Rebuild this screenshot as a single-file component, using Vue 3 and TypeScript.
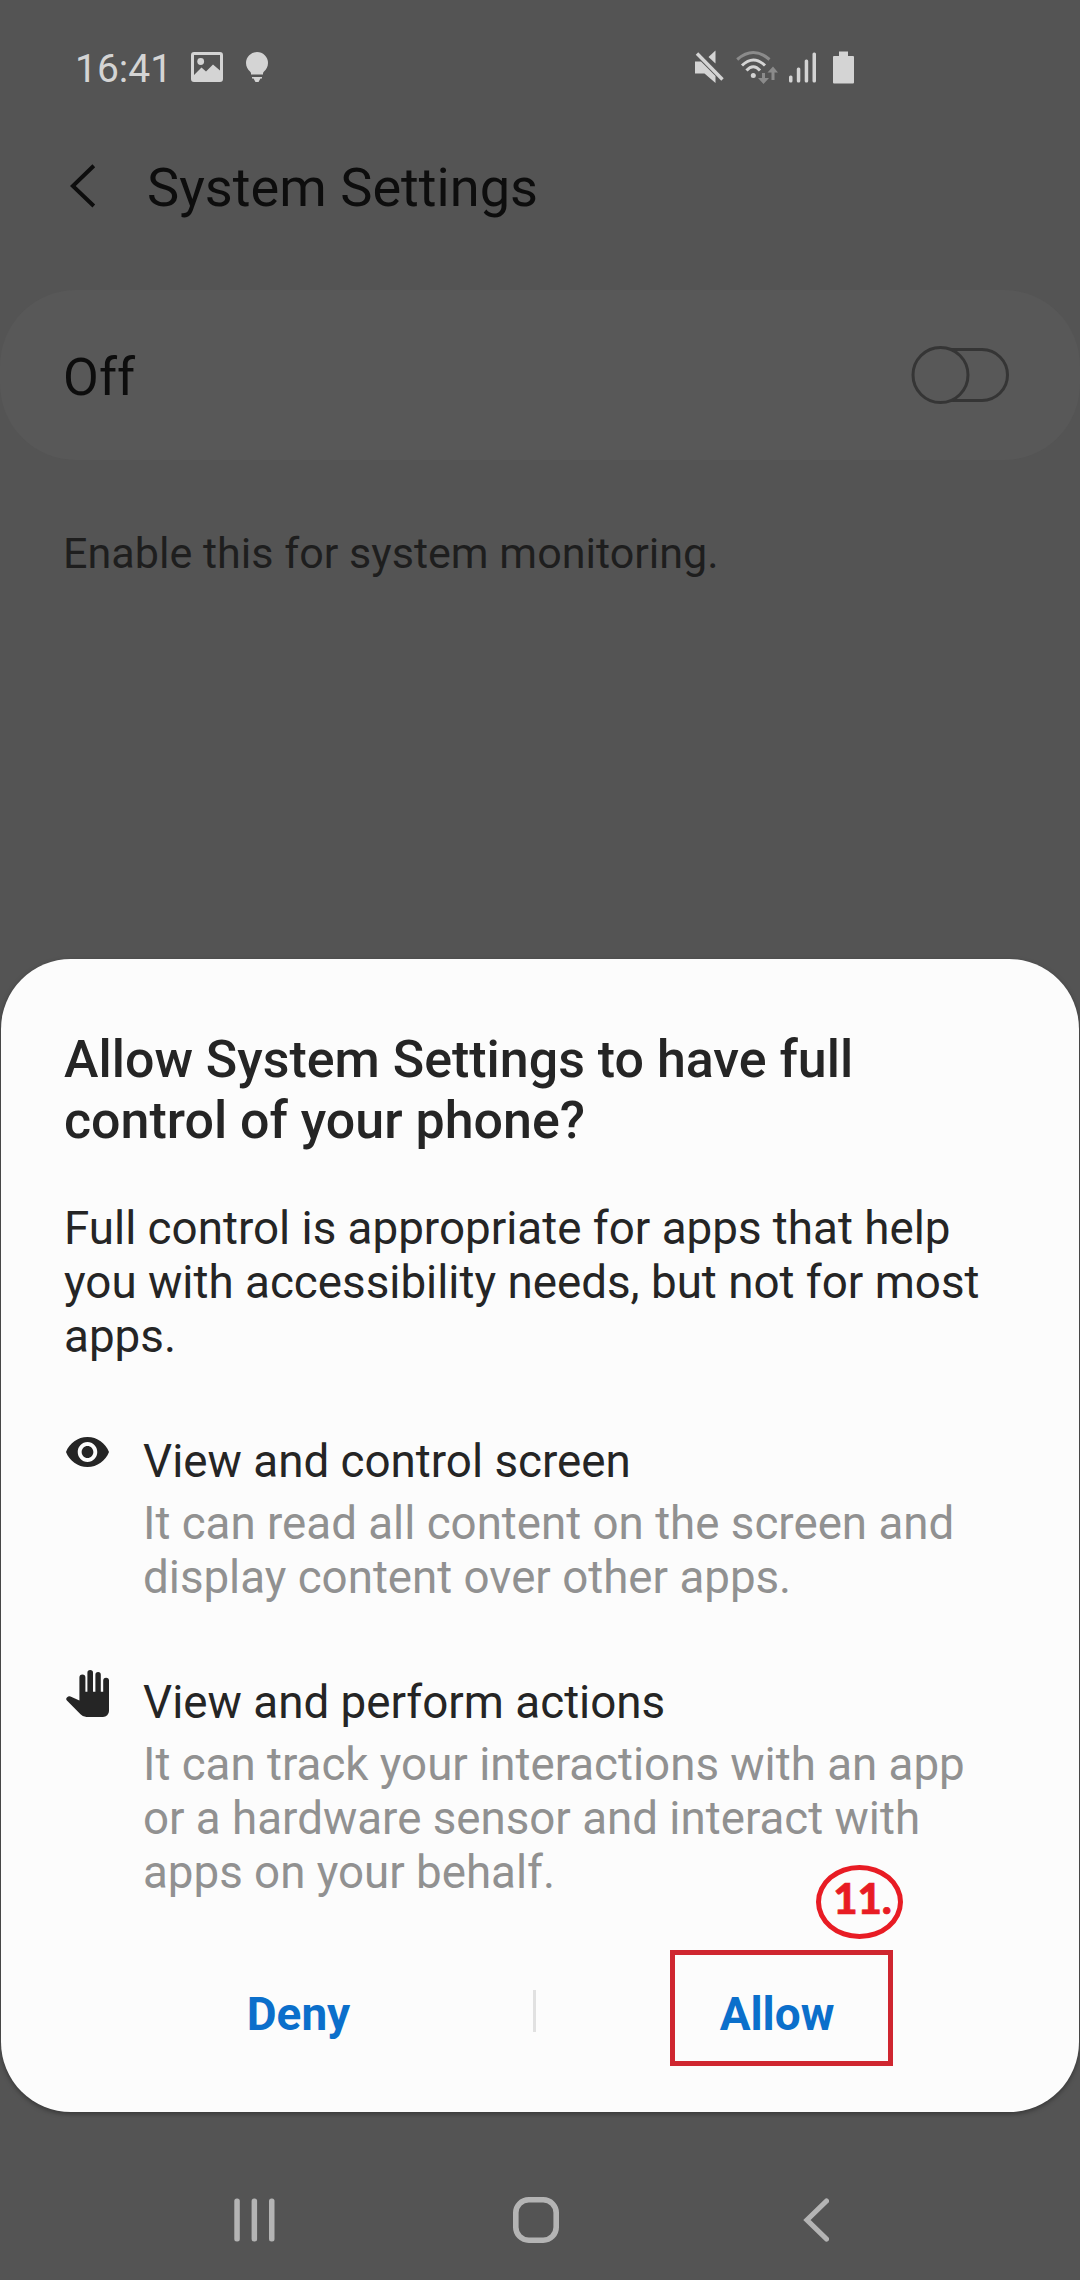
<script setup lang="ts">
interface Permission {
  icon: 'eye' | 'hand'
  title: string
  lines: string[]
}

const heading: string[] = ['Allow System Settings to have full', 'control of your phone?']
const body: string[] = [
  'Full control is appropriate for apps that help',
  'you with accessibility needs, but not for most',
  'apps.',
]
const permissions: Permission[] = [
  {
    icon: 'eye',
    title: 'View and control screen',
    lines: ['It can read all content on the screen and', 'display content over other apps.'],
  },
  {
    icon: 'hand',
    title: 'View and perform actions',
    lines: ['It can track your interactions with an app', 'or a hardware sensor and interact with', 'apps on your behalf.'],
  },
]
</script>

<template>
  <div class="phone">
    <header class="status">
      <span class="time">16:41</span>
      <svg class="picture" width="32" height="30" viewBox="0 0 32 30">
        <path fill-rule="evenodd" d="M3 0H29Q32 0 32 3V27Q32 30 29 30H3Q0 30 0 27V3Q0 0 3 0ZM3 3V23L10.5 15.5L15 19.5L22 12.5L29 18.5V3Z" />
        <circle cx="9.7" cy="9.5" r="3.4" />
      </svg>
      <svg class="bulb" width="22" height="31" viewBox="0 0 22 31">
        <path d="M11 0a11 11 0 0 1 11 11c0 4-2 6.500-4 8.500-1 1-1 1.500-1 3H5c0-1.500 0-2-1-3-2-2-4-4.500-4-8.500a11 11 0 0 1 11-11Z" />
        <path d="M6 25h10v1.500h-1.500L12.500 30h-3L7.500 26.500H6Z" />
      </svg>
      <svg class="mute" width="30" height="34" viewBox="0 0 30 34">
        <path d="M0 11.500H6L20.500 26V33L9.500 23.500H0Z" />
        <path d="M20.500 0.500V13.500L13.500 7Z" />
        <path d="M2 3.500L27.500 29.500" fill="none" stroke="#d4d4d4" stroke-width="3.400" />
      </svg>
      <svg class="wifi" width="42" height="34" viewBox="0 0 42 34">
        <g fill="none" stroke-width="3">
          <path stroke="#8b8b8b" d="M1.200 9.500Q17.300-4.500 33.500 9.500" />
          <path stroke="#d4d4d4" d="M6 15.500Q17.300 4.500 29 15.500" />
          <path stroke="#d4d4d4" d="M10.500 20.500Q17.300 13 24 20.500" />
        </g>
        <circle cx="17.300" cy="25.500" r="2.500" />
        <path fill="#8b8b8b" d="M26 23h3v5h4l-5.500 6-5.500-6h4ZM35.500 30V22.500H31.500L37 16.500 42 22.500H38.500V30Z" />
      </svg>
      <svg class="signal" width="28" height="31" viewBox="0 0 28 31">
        <rect x="0" y="23.500" width="3.500" height="7" rx="1.500" />
        <rect x="7.800" y="15.500" width="3.500" height="15" rx="1.500" />
        <rect x="15.700" y="7.500" width="3.500" height="23" rx="1.500" />
        <rect x="23.500" y="0.500" width="3.500" height="30" rx="1.500" />
      </svg>
      <svg class="battery" width="21" height="33" viewBox="0 0 21 33">
        <path d="M6 0.500H15V5H20Q21 5 21 6V31.500Q21 32.500 20 32.500H1Q0 32.500 0 31.500V6Q0 5 1 5H6Z" />
      </svg>
    </header>

    <div class="titlebar">
      <svg width="26" height="44" viewBox="0 0 26 44">
        <path d="M23.800 1.800L2.800 22L23.800 42" fill="none" stroke="#0d0d0d" stroke-width="4" />
      </svg>
      <h1>System Settings</h1>
    </div>

    <section class="card">
      <span class="state">Off</span>
      <svg width="99" height="60" viewBox="0 0 99 60">
        <rect x="16" y="4.500" width="81.500" height="51" rx="25.500" fill="none" stroke="#353535" stroke-width="3" />
        <circle cx="30.500" cy="30" r="27.500" fill="#585858" stroke="#353535" stroke-width="3" />
      </svg>
    </section>
    <p class="note">Enable this for system monitoring.</p>

    <main class="sheet">
      <h2><span v-for="line in heading" :key="line" class="line">{{ line }}</span></h2>
      <p class="body"><span v-for="line in body" :key="line" class="line">{{ line }}</span></p>
      <article v-for="item in permissions" :key="item.title" class="permission">
        <div class="glyph">
          <svg v-if="item.icon === 'eye'" class="eye" width="43" height="30" viewBox="1 4.500 22 15" preserveAspectRatio="none">
            <path d="M12 4.500C7 4.500 2.730 7.610 1 12c1.730 4.390 6 7.500 11 7.500s9.270-3.110 11-7.500c-1.730-4.390-6-7.500-11-7.500zM12 17c-2.760 0-5-2.240-5-5s2.240-5 5-5 5 2.240 5 5-2.240 5-5 5zm0-8c-1.660 0-3 1.340-3 3s1.340 3 3 3 3-1.340 3-3-1.340-3-3-3z" />
          </svg>
          <svg v-else class="hand" width="43" height="47" viewBox="0 0 43 47">
            <path d="M13.400 30.500V7.600a3 3 0 0 1 6 0V21.700H21.400V2.800a2.800 2.800 0 0 1 5.600 0V21.700H29.400V4.700a2.700 2.700 0 0 1 5.400 0V21.700H37.200V10.600a2.900 2.900 0 0 1 5.800 0V41a6 6 0 0 1-6 6H20.500Q16.800 47 14.500 44.300L0.900 30.500Q-0.500 29 0.900 27.500Q2.500 25.800 4.500 26.400Z" />
          </svg>
        </div>
        <div>
          <h3>{{ item.title }}</h3>
          <p class="detail"><span v-for="line in item.lines" :key="line" class="line">{{ line }}</span></p>
        </div>
      </article>
      <div class="actions">
        <button class="deny">Deny</button>
        <span class="divider"></span>
        <button class="allow">Allow<span class="step"><b>11.</b></span></button>
      </div>
    </main>

    <nav class="nav">
      <svg width="41" height="44" viewBox="0 0 41 44">
        <rect x="0.300" y="0.500" width="5.500" height="43" rx="2.500" />
        <rect x="17.600" y="0.500" width="5.500" height="43" rx="2.500" />
        <rect x="35" y="0.500" width="5.500" height="43" rx="2.500" />
      </svg>
      <svg width="46" height="46" viewBox="0 0 46 46">
        <rect x="2.800" y="2.800" width="40.400" height="40.400" rx="13" fill="none" stroke="#b4b4b4" stroke-width="5.600" />
      </svg>
      <svg width="32" height="44" viewBox="0 0 32 44">
        <path d="M29.500 3L10 22L29.500 41" fill="none" stroke="#b4b4b4" stroke-width="5.200" stroke-linecap="round" />
      </svg>
    </nav>
  </div>
</template>

<style>
body {
  margin: 0;
  background: #545454;
}
</style>

<style scoped>
.phone {
  width: 1080px;
  height: 2280px;
  display: flex;
  flex-direction: column;
  overflow: hidden;
  background: #545454;
  font-family: Roboto, "Liberation Sans", sans-serif;
}
h1, h2, h3, p {
  margin: 0;
  font-weight: 400;
}
svg {
  display: block;
  flex: none;
}
.line {
  display: block;
  white-space: nowrap;
}
.status {
  height: 134px;
  flex: none;
  display: flex;
  align-items: center;
  box-sizing: border-box;
  padding-left: 75px;
  color: #d4d4d4;
  fill: #d4d4d4;
}
.time {
  width: 116px;
  font-size: 39px;
  line-height: 48px;
  padding-top: 4px;
}
.bulb { margin-left: 23px; }
.mute { margin-left: 427px; }
.wifi { margin-left: 11px; }
.signal { margin-left: 11px; }
.battery { margin-left: 16px; }
.titlebar {
  height: 104px;
  flex: none;
  display: flex;
  align-items: center;
  padding-left: 70px;
}
h1 {
  margin-left: 51px;
  padding-top: 3px;
  font-size: 54.2px;
  line-height: 64px;
  color: #0d0d0d;
}
.card {
  margin-top: 52px;
  height: 170px;
  flex: none;
  display: flex;
  align-items: center;
  justify-content: space-between;
  box-sizing: border-box;
  padding: 0 71px 0 63px;
  border-radius: 76px;
  background: #585858;
}
.state {
  font-size: 52px;
  line-height: 60px;
  letter-spacing: 0.1px;
  padding-top: 5px;
  color: #0d0d0d;
}
.note {
  margin: 67px 0 0 63px;
  font-size: 43.1px;
  line-height: 54px;
  color: #1e1e1e;
}
.sheet {
  height: 1153px;
  flex: none;
  margin: 378px 1px 0;
  box-sizing: border-box;
  padding: 70px 0 0 63px;
  border-radius: 70px;
  background: #fcfcfc;
  box-shadow: 0 2px 5px rgba(0, 0, 0, 0.35);
  color: #252525;
}
h2 {
  font-size: 51.95px;
  font-weight: 500;
  line-height: 61px;
}
.body {
  margin-top: 51px;
  font-size: 45.75px;
  line-height: 54px;
}
.permission {
  display: flex;
  margin-top: 71px;
}
.glyph {
  width: 79px;
  fill: #252525;
}
.eye { margin: 2px 0 0 2px; }
.hand { margin: -6px 0 0 2px; }
h3 {
  font-size: 45.75px;
  line-height: 54px;
}
.detail {
  margin-top: 8px;
  font-size: 45.7px;
  line-height: 54px;
  color: #919191;
}
.actions {
  display: flex;
  align-items: center;
  margin-top: 50px;
}
button {
  box-sizing: border-box;
  height: 116px;
  border: 0;
  padding: 11px 0 0;
  background: none;
  font: 700 45.9px/54px Roboto, "Liberation Sans", sans-serif;
  color: #0b6fcb;
}
.deny {
  width: 469px;
}
.divider {
  width: 3px;
  height: 42px;
  margin-top: 6px;
  background: #e1e1e1;
}
.allow {
  position: relative;
  width: 223px;
  margin-left: 134px;
  padding-right: 9px;
  border: 5px solid #cf2630;
}
.step {
  position: absolute;
  left: 141px;
  top: -90px;
  width: 87px;
  height: 74px;
  box-sizing: border-box;
  border: 5px solid #e81c24;
  border-radius: 50%;
  display: flex;
  justify-content: center;
  font: 700 42px/56px Lato, "Open Sans", sans-serif;
  -webkit-text-stroke: 0.7px #e81c24;
  color: #e81c24;
}
.step b {
  padding-left: 6px;
}
.nav {
  height: 121px;
  margin-top: 47px;
  flex: none;
  display: flex;
  align-items: center;
  gap: 238px;
  padding-left: 234px;
  fill: #b4b4b4;
}
</style>
